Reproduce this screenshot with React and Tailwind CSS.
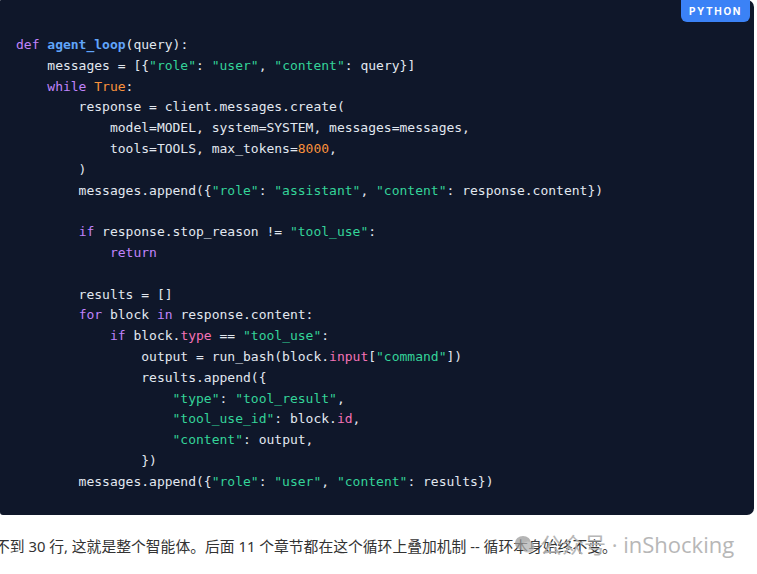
import React from "react";

const K = ({ children }) => <span className="text-[#c084fc]">{children}</span>;
const S = ({ children }) => <span className="text-[#34d399]">{children}</span>;
const N = ({ children }) => <span className="text-[#fb923c]">{children}</span>;
const A = ({ children }) => <span className="text-[#f472b6]">{children}</span>;
const F = ({ children }) => <span className="text-[#60a5fa] font-bold">{children}</span>;

const lines = [
  <><K>def</K> <F>agent_loop</F>(query):</>,
  <>    messages = [{"{"}<S>"role"</S>: <S>"user"</S>, <S>"content"</S>: query{"}"}]</>,
  <>    <K>while</K> <N>True</N>:</>,
  <>        response = client.messages.create(</>,
  <>            model=MODEL, system=SYSTEM, messages=messages,</>,
  <>            tools=TOOLS, max_tokens=<N>8000</N>,</>,
  <>        )</>,
  <>        messages.append({"{"}<S>"role"</S>: <S>"assistant"</S>, <S>"content"</S>: response.content{"}"})</>,
  <>{" "}</>,
  <>        <K>if</K> response.stop_reason != <S>"tool_use"</S>:</>,
  <>            <K>return</K></>,
  <>{" "}</>,
  <>        results = []</>,
  <>        <K>for</K> block <K>in</K> response.content:</>,
  <>            <K>if</K> block.<A>type</A> == <S>"tool_use"</S>:</>,
  <>                output = run_bash(block.<A>input</A>[<S>"command"</S>])</>,
  <>                results.append({"{"}</>,
  <>                    <S>"type"</S>: <S>"tool_result"</S>,</>,
  <>                    <S>"tool_use_id"</S>: block.<A>id</A>,</>,
  <>                    <S>"content"</S>: output,</>,
  <>                {"}"})</>,
  <>        messages.append({"{"}<S>"role"</S>: <S>"user"</S>, <S>"content"</S>: results{"}"})</>,
];

export default function App() {
  return (
    <div className="w-[757px] h-[574px] bg-white overflow-hidden relative">
      <div className="relative w-[754px] bg-[#0f172a] rounded-br-[7px] rounded-tr-[7px] rounded-bl-[3px] rounded-tl-[1px]">
        <div className="absolute right-[4px] top-0 h-[22px] w-[69px] bg-[#3b82f6] rounded-b-[6px] flex items-center justify-center text-white text-[10px] font-bold tracking-[1.6px] [font-family:Inter,'Noto_Sans',sans-serif]">
          PYTHON
        </div>
        <pre className="m-0 pl-[16px] pt-[35px] pb-[22px] text-[13px] leading-[20.8px] text-[#e2e8f0] [font-family:'DejaVu_Sans_Mono',monospace] whitespace-pre">
          {lines.map((l, i) => (
            <div key={i}>{l}</div>
          ))}
        </pre>
      </div>
      <div className="mt-[20px] ml-[-5px] text-[14.8px] leading-[22px] text-[#333333] whitespace-nowrap [font-family:'Noto_Sans','Noto_Sans_CJK_SC',sans-serif]">
        不到 30 行, 这就是整个智能体。后面 11 个章节都在这个循环上叠加机制 -- 循环本身始终不变。
      </div>
      <div className="absolute left-[514px] top-[529px] flex items-center gap-[4px] text-[22px] leading-[30px] text-[#b0b0b0] opacity-90 whitespace-nowrap [font-family:'Open_Sans','Noto_Sans_CJK_SC',sans-serif]">
        <svg width="22" height="22" viewBox="0 0 22 22" className="opacity-80">
          <ellipse cx="9" cy="10" rx="8" ry="7" fill="#9a9a9a" />
          <ellipse cx="14" cy="14" rx="6.5" ry="5.5" fill="#b0b0b0" />
        </svg>
        <span>公众号 · inShocking</span>
      </div>
    </div>
  );
}
